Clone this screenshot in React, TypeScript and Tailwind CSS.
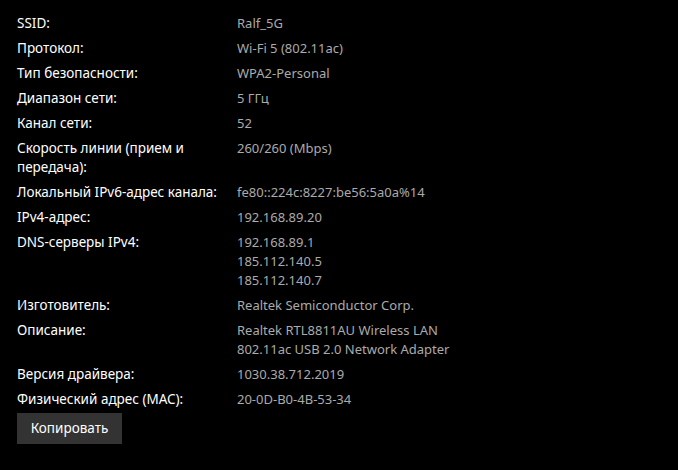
const rows: { label: string; value: string[] }[] = [
  { label: 'SSID:', value: ['Ralf_5G'] },
  { label: 'Протокол:', value: ['Wi-Fi 5 (802.11ac)'] },
  { label: 'Тип безопасности:', value: ['WPA2-Personal'] },
  { label: 'Диапазон сети:', value: ['5 ГГц'] },
  { label: 'Канал сети:', value: ['52'] },
  { label: 'Скорость линии (прием и передача):', value: ['260/260 (Mbps)'] },
  { label: 'Локальный IPv6-адрес канала:', value: ['fe80::224c:8227:be56:5a0a%14'] },
  { label: 'IPv4-адрес:', value: ['192.168.89.20'] },
  { label: 'DNS-серверы IPv4:', value: ['192.168.89.1', '185.112.140.5', '185.112.140.7'] },
  { label: 'Изготовитель:', value: ['Realtek Semiconductor Corp.'] },
  { label: 'Описание:', value: ['Realtek RTL8811AU Wireless LAN', '802.11ac USB 2.0 Network Adapter'] },
  { label: 'Версия драйвера:', value: ['1030.38.712.2019'] },
  { label: 'Физический адрес (MAC):', value: ['20-0D-B0-4B-53-34'] },
];

export default function App() {
  return (
    <div
      className="w-[678px] h-[470px] bg-black pl-[17px] pt-[14px] text-[13.5px] leading-[19px] overflow-hidden"
      style={{ fontFamily: '"Noto Sans", "Segoe UI", sans-serif' }}
    >
      <div className="grid grid-cols-[220px_1fr] gap-y-[6px]">
        {rows.map((r) => (
          <div key={r.label} className="contents">
            <div className="text-white pr-[8px]">{r.label}</div>
            <div className="text-[#ababab] text-[13px]">
              {r.value.map((v) => (
                <div key={v}>{v}</div>
              ))}
            </div>
          </div>
        ))}
      </div>
      <button className="mt-[4px] h-[31px] w-[105px] bg-[#333333] text-white text-[13.5px]">
        Копировать
      </button>
    </div>
  );
}
